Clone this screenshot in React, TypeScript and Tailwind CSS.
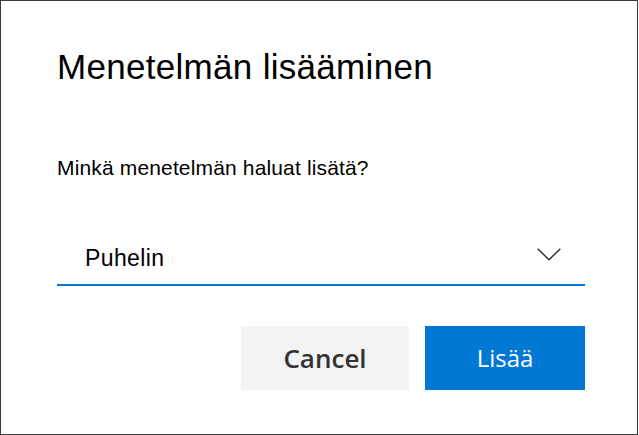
import React from "react";

export default function App() {
  return (
    <div className="w-[639px] h-[435px] bg-white">
      <div className="w-[638px] h-[435px] border border-[#3c3c3c] bg-white pl-[56px] pr-[52px] pt-[46px] flex flex-col">
        <h1
          className="text-[35px] leading-[40px] text-black m-0 tracking-[0.3px]"
          style={{ fontFamily: '"Liberation Sans", Arial, sans-serif' }}
        >
          Menetelmän lisääminen
        </h1>
        <div
          className="mt-[69px] text-[21px] leading-[24px] text-black tracking-[0.15px]"
          style={{ fontFamily: '"Liberation Sans", Arial, sans-serif' }}
        >
          Minkä menetelmän haluat lisätä?
        </div>
        <div className="mt-[56px] flex items-start justify-between border-b-2 border-[#0078d4] pl-[28px] pr-[24px]">
          <div
            className="pt-[8px] pb-[12px] text-[23px] leading-[28px] text-black tracking-[0.4px]"
            style={{ fontFamily: '"Liberation Sans", Arial, sans-serif' }}
          >
            Puhelin
          </div>
          <svg width="24" height="13" viewBox="0 0 24 13" className="mt-[12px]" fill="none">
            <path d="M0.7 0.7 L12 11.8 L23.3 0.7" stroke="#333333" strokeWidth="1.5" />
          </svg>
        </div>
        <div className="mt-[40px] flex justify-end gap-[16px]">
          <button
            className="w-[168px] h-[64px] bg-[#f3f3f3] text-[#333333] text-[26px] font-semibold flex items-center justify-center"
            style={{ fontFamily: '"Open Sans", "Noto Sans", sans-serif' }}
          >
            Cancel
          </button>
          <button
            className="w-[160px] h-[64px] bg-[#0078d4] text-white text-[24px] flex items-center justify-center"
            style={{ fontFamily: '"Open Sans", "Noto Sans", sans-serif' }}
          >
            Lisää
          </button>
        </div>
      </div>
    </div>
  );
}
